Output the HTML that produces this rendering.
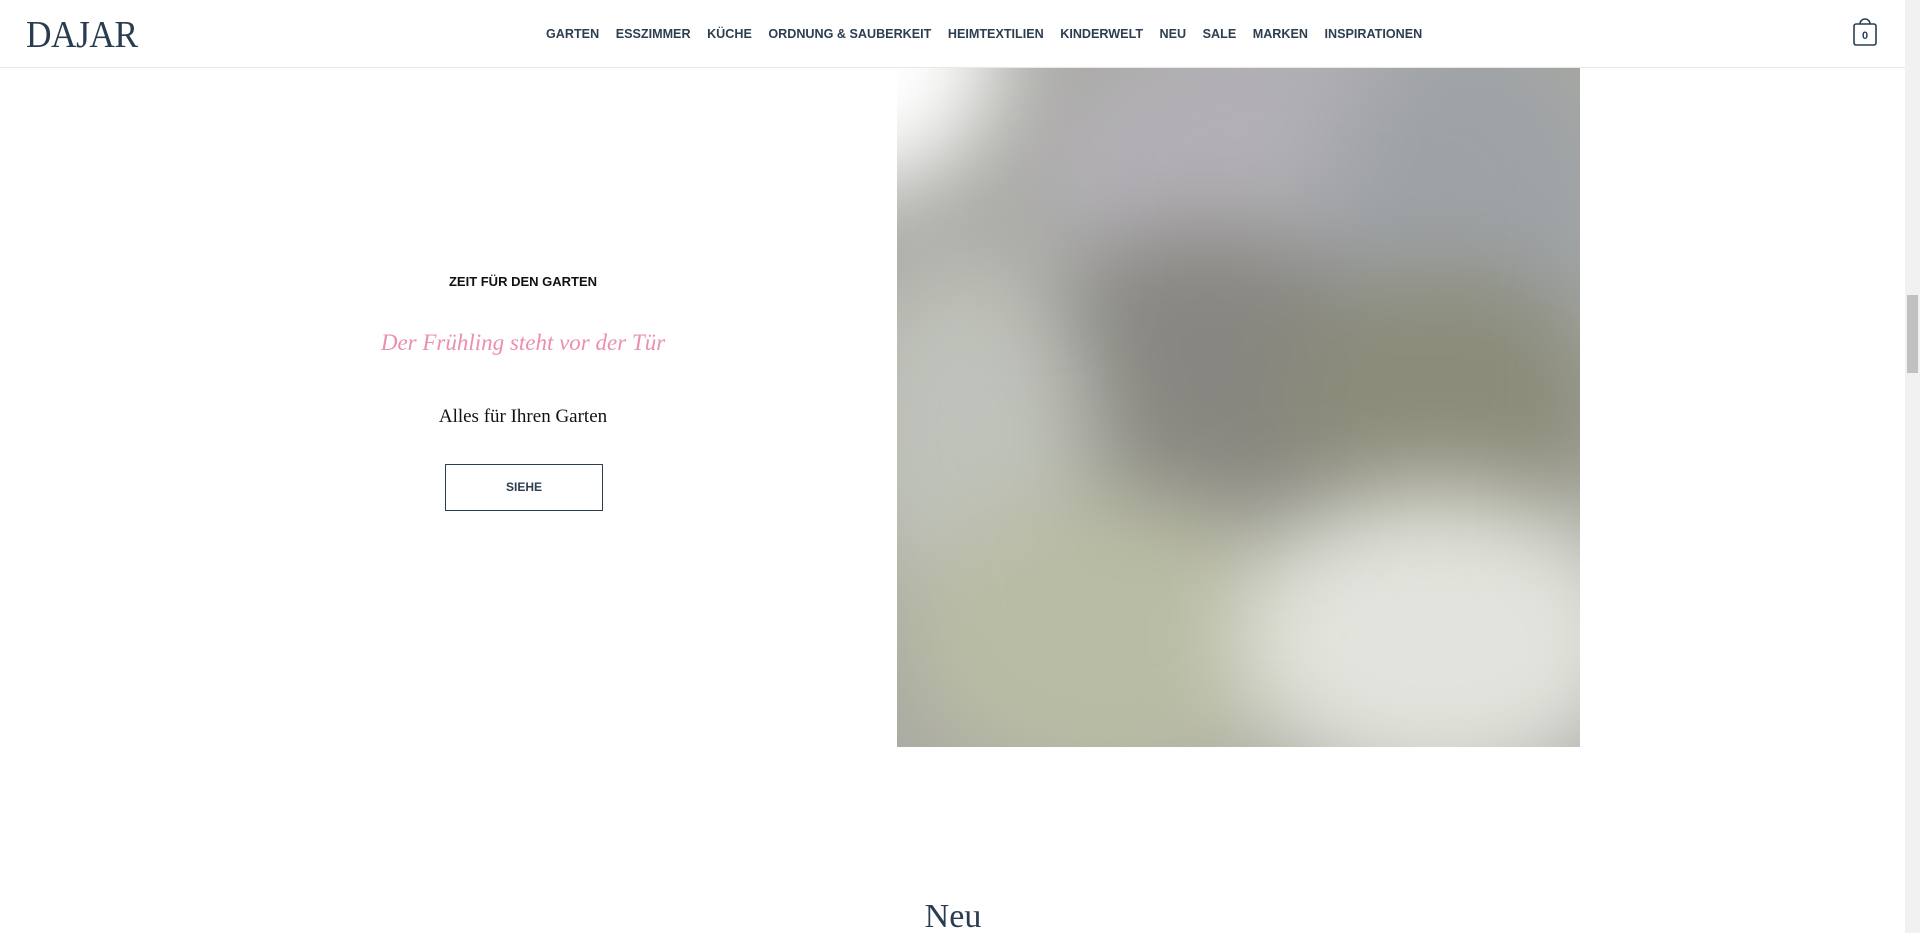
<!DOCTYPE html>
<html><head><meta charset="utf-8"><style>
*{margin:0;padding:0;box-sizing:border-box}
html,body{width:1920px;height:933px;overflow:hidden;background:#fff;font-family:"Liberation Sans",sans-serif}
.hdr{position:absolute;left:0;top:0;width:1905px;height:68px;border-bottom:1px solid #e8e8e6;background:#fff}
.logo{position:absolute;left:26px;top:13px;font-family:"Liberation Serif",serif;font-size:38px;color:#2a3d50;letter-spacing:-0.5px;transform:scaleX(0.93);transform-origin:left}
.nav{position:absolute;left:546px;top:27px;font-size:12.6px;font-weight:bold;color:#2c3e50;white-space:nowrap}
.nav span{margin-right:16.5px}
.img{position:absolute;left:897px;top:68px;width:683px;height:679px;overflow:hidden;background:#a9a9a3}
.blobs{position:absolute;inset:-60px;filter:blur(45px)}
.b{position:absolute;border-radius:50%}
.sb{position:absolute;left:1905px;top:0;width:15px;height:933px;background:#f1f1f1}
.th{position:absolute;left:1907px;top:295px;width:11px;height:78px;background:#c1c1c1}
.c{position:absolute;left:323px;width:400px;text-align:center}
</style></head><body>
<div class="hdr">
<div class="logo">DAJAR</div>
<div class="nav"><span>GARTEN</span><span>ESSZIMMER</span><span>KÜCHE</span><span>ORDNUNG &amp; SAUBERKEIT</span><span>HEIMTEXTILIEN</span><span>KINDERWELT</span><span>NEU</span><span>SALE</span><span>MARKEN</span><span>INSPIRATIONEN</span></div>
<svg style="position:absolute;left:1850px;top:17px" width="30" height="30" viewBox="0 0 30 30"><path d="M10 7 a5 5 0 0 1 10 0" fill="none" stroke="#2c3e50" stroke-width="1.6"/><rect x="4" y="7" width="22" height="21" rx="2" fill="none" stroke="#2c3e50" stroke-width="1.6"/><text x="15" y="22" font-size="11" font-weight="bold" text-anchor="middle" fill="#2c3e50" font-family="Liberation Sans">0</text></svg>
</div>
<div class="img"><div class="blobs">
<div class="b" style="left:200px;top:0;width:500px;height:350px;background:#b2b0b5"></div>
<div class="b" style="left:480px;top:20px;width:300px;height:400px;background:#9ea2a6"></div>
<div class="b" style="left:180px;top:220px;width:380px;height:300px;background:#878680"></div>
<div class="b" style="left:450px;top:260px;width:320px;height:280px;background:#8b8c79"></div>
<div class="b" style="left:0;top:250px;width:260px;height:350px;background:#bfc2ba"></div>
<div class="b" style="left:60px;top:480px;width:420px;height:300px;background:#b9bca4"></div>
<div class="b" style="left:400px;top:480px;width:400px;height:300px;background:#e2e3dc"></div>
<div class="b" style="left:-100px;top:-100px;width:260px;height:280px;background:#fff"></div>
</div></div>
<div class="sb"></div><div class="th"></div>
<div class="c" style="top:274px;font-size:13px;font-weight:bold;color:#111">ZEIT FÜR DEN GARTEN</div>
<div class="c" style="top:330px;font-family:'Liberation Serif',serif;font-style:italic;font-size:23px;color:#ec8fac">Der Frühling steht vor der Tür</div>
<div class="c" style="top:406px;font-family:'Liberation Serif',serif;font-size:19px;color:#111">Alles für Ihren Garten</div>
<div style="position:absolute;left:445px;top:464px;width:158px;height:47px;border:1px solid #2c3e50;text-align:center;line-height:45px;font-size:12px;font-weight:bold;color:#2c3e50">SIEHE</div>
<div style="position:absolute;left:853px;top:898px;width:200px;text-align:center;font-family:'Liberation Serif',serif;font-size:34px;color:#2a3d50">Neu</div>
</body></html>
